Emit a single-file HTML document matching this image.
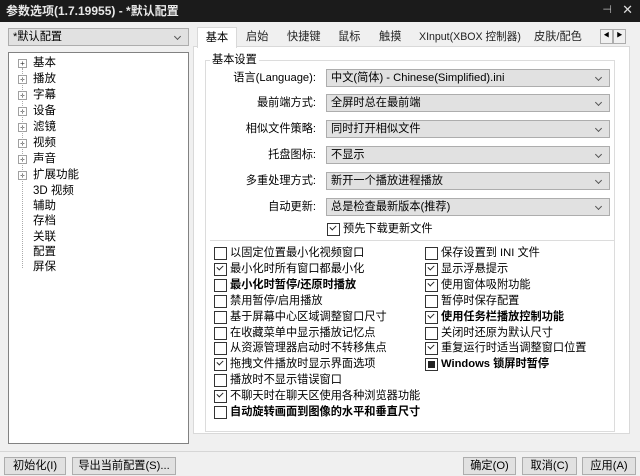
<!DOCTYPE html>
<html><head><meta charset="utf-8"><style>
*{margin:0;padding:0;box-sizing:border-box}
body{width:640px;height:476px;background:#f0f0f0;font-family:"Liberation Sans","Noto Sans CJK SC",sans-serif;font-size:11.2px;color:#000;position:relative;overflow:hidden}
.a{position:absolute;white-space:nowrap}
.title{left:0;top:0;width:640px;height:22px;background:#1b1b1b;color:#e8e8e8;font-size:12px;font-weight:bold;line-height:22px;padding-left:6px}
.combo{position:absolute;height:18px;background:#e1e1e1;border:1px solid #adadad;line-height:16px;padding-left:4px;font-size:11.2px}
.combo:after{content:"";position:absolute;right:8px;top:5px;width:4px;height:4px;border-right:1px solid #555;border-bottom:1px solid #555;transform:rotate(45deg)}
.tree{left:8px;top:52px;width:181px;height:392px;background:#fff;border:1px solid #828282}
.ti{position:absolute;left:24px;font-size:11.5px;line-height:14px}
.pb{position:absolute;left:9px;width:9px;height:9px;border:1px solid #a0a0a0;background:#fff;font-size:8px;line-height:7px;text-align:center;color:#333}
.tab{position:absolute;top:29px;height:17px;line-height:16px;font-size:11.2px;color:#222}
.panel{left:193px;top:46px;width:437px;height:388px;background:#fff;border:1px solid #d9d9d9}
.lbl{position:absolute;text-align:right;width:120px;left:196px;font-size:11.2px;line-height:18px}
.cb{position:absolute;font-size:11.2px;line-height:14px;padding-left:16px}
.cb:before{content:"";position:absolute;left:0;top:1px;width:11px;height:11px;border:1px solid #333;background:#fff}
.cb.c:after{content:"";position:absolute;left:3px;top:3px;width:5px;height:3px;border-left:1px solid #222;border-bottom:1px solid #222;transform:rotate(-45deg)}
.cb.s:after{content:"";position:absolute;left:3px;top:4px;width:7px;height:7px;background:#222}
.b{font-weight:bold}
.btn{position:absolute;top:457px;height:18px;border:1px solid #adadad;background:#e1e1e1;text-align:center;line-height:16px;font-size:11.2px}
</style></head><body>
<div class="a title">参数选项(1.7.19955) - *默认配置</div>
<div class="a" style="right:28px;top:3px;color:#bbb;font-size:11px">⊣</div>
<div class="a" style="right:7px;top:2px;color:#ddd;font-size:13px">✕</div>

<div class="combo" style="left:8px;top:28px;width:181px">*默认配置</div>
<div class="a tree">
<span class="pb" style="top:6px">+</span><span class="ti" style="top:3px">基本</span>
<span class="pb" style="top:22px">+</span><span class="ti" style="top:19px">播放</span>
<span class="pb" style="top:38px">+</span><span class="ti" style="top:35px">字幕</span>
<span class="pb" style="top:54px">+</span><span class="ti" style="top:51px">设备</span>
<span class="pb" style="top:70px">+</span><span class="ti" style="top:67px">滤镜</span>
<span class="pb" style="top:86px">+</span><span class="ti" style="top:83px">视频</span>
<span class="pb" style="top:102px">+</span><span class="ti" style="top:99px">声音</span>
<span class="pb" style="top:118px">+</span><span class="ti" style="top:115px">扩展功能</span>
<span class="ti" style="top:131px">3D 视频</span>
<span class="ti" style="top:146px">辅助</span>
<span class="ti" style="top:161px">存档</span>
<span class="ti" style="top:177px">关联</span>
<span class="ti" style="top:192px">配置</span>
<span class="ti" style="top:207px">屏保</span>
<div style="position:absolute;left:13px;top:15px;width:0;height:200px;border-left:1px dotted #aaa"></div>
</div>

<div class="a panel"></div>
<div class="a" style="left:197px;top:27px;width:40px;height:21px;background:#fff;border:1px solid #d9d9d9;border-bottom:none;text-align:center;line-height:20px">基本</div>
<span class="tab" style="left:246px">启始</span>
<span class="tab" style="left:287px">快捷键</span>
<span class="tab" style="left:338px">鼠标</span>
<span class="tab" style="left:379px">触摸</span>
<span class="tab" style="left:419px;font-size:10.6px">XInput(XBOX 控制器)</span>
<span class="tab" style="left:534px">皮肤/配色</span>
<div class="a" style="left:600px;top:29px;width:13px;height:15px;border:1px solid #adadad;background:#f0f0f0;font-size:6px;text-align:center;line-height:13px">◀</div>
<div class="a" style="left:613px;top:29px;width:13px;height:15px;border:1px solid #adadad;background:#f0f0f0;font-size:6px;text-align:center;line-height:13px">▶</div>

<div class="a" style="left:205px;top:60px;width:410px;height:372px;border:1px solid #dcdcdc"></div>
<div class="a" style="left:210px;top:53px;background:#fff;padding:0 2px;line-height:14px">基本设置</div>

<span class="lbl" style="top:69px">语言(Language):</span><div class="combo" style="left:326px;top:69px;width:284px">中文(简体) - Chinese(Simplified).ini</div>
<span class="lbl" style="top:94px">最前端方式:</span><div class="combo" style="left:326px;top:94px;width:284px">全屏时总在最前端</div>
<span class="lbl" style="top:120px">相似文件策略:</span><div class="combo" style="left:326px;top:120px;width:284px">同时打开相似文件</div>
<span class="lbl" style="top:146px">托盘图标:</span><div class="combo" style="left:326px;top:146px;width:284px">不显示</div>
<span class="lbl" style="top:172px">多重处理方式:</span><div class="combo" style="left:326px;top:172px;width:284px">新开一个播放进程播放</div>
<span class="lbl" style="top:198px">自动更新:</span><div class="combo" style="left:326px;top:198px;width:284px">总是检查最新版本(推荐)</div>
<span class="cb c" style="left:327px;top:222px">预先下载更新文件</span>
<div class="a" style="left:210px;top:240px;width:404px;border-top:1px solid #dcdcdc"></div>

<span class="cb" style="left:214px;top:246px">以固定位置最小化视频窗口</span>
<span class="cb c" style="left:214px;top:262px">最小化时所有窗口都最小化</span>
<span class="cb b" style="left:214px;top:278px">最小化时暂停/还原时播放</span>
<span class="cb" style="left:214px;top:294px">禁用暂停/启用播放</span>
<span class="cb" style="left:214px;top:310px">基于屏幕中心区域调整窗口尺寸</span>
<span class="cb" style="left:214px;top:326px">在收藏菜单中显示播放记忆点</span>
<span class="cb" style="left:214px;top:341px">从资源管理器启动时不转移焦点</span>
<span class="cb c" style="left:214px;top:357px">拖拽文件播放时显示界面选项</span>
<span class="cb" style="left:214px;top:373px">播放时不显示错误窗口</span>
<span class="cb c" style="left:214px;top:389px">不聊天时在聊天区使用各种浏览器功能</span>
<span class="cb b" style="left:214px;top:405px">自动旋转画面到图像的水平和垂直尺寸</span>

<span class="cb" style="left:425px;top:246px">保存设置到 INI 文件</span>
<span class="cb c" style="left:425px;top:262px">显示浮悬提示</span>
<span class="cb c" style="left:425px;top:278px">使用窗体吸附功能</span>
<span class="cb" style="left:425px;top:294px">暂停时保存配置</span>
<span class="cb c b" style="left:425px;top:310px">使用任务栏播放控制功能</span>
<span class="cb" style="left:425px;top:326px">关闭时还原为默认尺寸</span>
<span class="cb c" style="left:425px;top:341px">重复运行时适当调整窗口位置</span>
<span class="cb s b" style="left:425px;top:357px">Windows 锁屏时暂停</span>

<div class="a" style="left:0;top:451px;width:640px;border-top:1px solid #d6d6d6"></div>
<div class="btn" style="left:4px;width:62px">初始化(I)</div>
<div class="btn" style="left:72px;width:104px">导出当前配置(S)...</div>
<div class="btn" style="left:463px;width:53px">确定(O)</div>
<div class="btn" style="left:522px;width:55px">取消(C)</div>
<div class="btn" style="left:582px;width:54px">应用(A)</div>
</body></html>
